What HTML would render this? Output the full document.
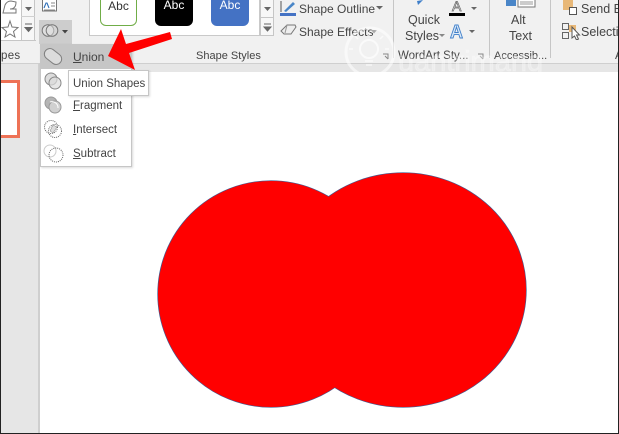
<!DOCTYPE html>
<html><head><meta charset="utf-8"><style>
html,body{margin:0;padding:0;background:#fff}
#p{position:relative;width:619px;height:434px;overflow:hidden;background:#fff;font-family:"Liberation Sans",sans-serif;color:#444}
.a{position:absolute}
.t{position:absolute;white-space:nowrap;font-size:11.5px;line-height:14px;color:#444}
.u{text-decoration:underline}
.abc{position:absolute;top:-6px;height:32px;border-radius:0 0 6px 6px;font-size:12px;text-align:center;line-height:23px;box-sizing:border-box}
.sep{position:absolute;top:0;width:1px;height:58px;background:#c6c6c6}
</style></head><body><div id="p">
<div class="a" style="left:0;top:0;width:619px;height:63px;background:#f1f1f1"></div>
<div class="a" style="left:0;top:63px;width:619px;height:1px;background:#cfcfcf"></div>
<div class="a" style="left:0;top:64px;width:619px;height:8px;background:#e6e6e6"></div>
<div class="a" style="left:0;top:64px;width:39px;height:370px;background:#e6e6e6"></div>
<div class="a" style="left:38px;top:64px;width:2px;height:370px;background:#cfcfcf"></div>
<div class="a" style="left:0;top:80px;width:20px;height:58px;background:#fff;border:3px solid #ee7256;border-left:0;box-sizing:border-box"></div>

<!-- shape gallery -->
<div class="a" style="left:1px;top:0;width:20px;height:40px;background:#fff"></div>
<div class="a" style="left:21px;top:0;width:14px;height:40px;background:#f7f7f7;border-left:1px solid #c6c6c6;border-right:1px solid #c6c6c6;box-sizing:border-box"></div>
<div class="a" style="left:0;top:40px;width:36px;height:1px;background:#c6c6c6"></div>
<div class="a" style="left:21px;top:16px;width:14px;height:1px;background:#d0d0d0"></div>
<svg class="a" style="left:0;top:0" width="70" height="44" fill="none">
<path d="M3 13 L5 5 Q7 1 11 1 L16 2 Q16 9 10 9 L16 9 L16 13Z" stroke="#777"/>
<path d="M10 21 L12 27 L18 27.500 L13.500 31.500 L15 37 L10 34 L5 37 L6.500 31.500 L2 27.500 L8 27Z" stroke="#777"/>
<path d="M25 7h7l-3.500 4z" fill="#666"/>
<path d="M25 24h7M25 27.500h7l-3.500 4z" stroke="#666" fill="#666" stroke-width="1"/>
<rect x="42.500" y="-1" width="14" height="12" fill="#fff" stroke="#777"/>
<path d="M44 8l2-5h1l2 5" stroke="#2e6fb8" stroke-width="1.100"/><path d="M51 3h4M51 6h4M44 10h11" stroke="#888"/>
</svg>
<div class="a" style="left:39px;top:20px;width:33px;height:24px;background:#cdcdcd"></div>
<svg class="a" style="left:39px;top:20px" width="33" height="24" fill="none">
<circle cx="9" cy="10.500" r="5.800" fill="#dedede" stroke="#777"/><circle cx="13" cy="10.500" r="5.800" fill="#dedede" fill-opacity=".5" stroke="#777"/>
<path d="M23 10h6l-3 3.500z" fill="#444"/>
</svg>
<div class="t" style="left:1px;top:49px;letter-spacing:.3px">pes</div>

<!-- shape styles -->
<div class="a" style="left:89px;top:0;height:36px;width:171px;background:#fff;border:1px solid #c9c9c9;border-top:0;box-sizing:border-box"></div>
<div class="abc" style="left:100px;width:37px;background:#fff;border:1px solid #70ad47;color:#333">Abc</div>
<div class="abc" style="left:155px;width:38px;background:#000;color:#fff">Abc</div>
<div class="abc" style="left:211px;width:38px;background:#4472c4;color:#fff">Abc</div>
<div class="a" style="left:260px;top:0;width:14px;height:36px;background:#f7f7f7;border:1px solid #c6c6c6;border-top:0;box-sizing:border-box"></div>
<div class="a" style="left:260px;top:17px;width:14px;height:1px;background:#c6c6c6"></div>
<svg class="a" style="left:260px;top:0" width="60" height="42" fill="none">
<path d="M4 7h7l-3.500 4z" fill="#666"/><path d="M4 24h7M4 27h7l-3.500 4z" stroke="#666" fill="#666"/>
<rect x="20" y="13" width="16" height="3" fill="#4472c4"/>
<path d="M24 11l9-9 2 2-9 8z" fill="#4a86c8"/><path d="M21 1v11" stroke="#555"/>
<path d="M21 31l6-6h8l1 2-5 7h-7z" fill="#eee" stroke="#777"/><path d="M27 25l-2 8" stroke="#999"/>
</svg>
<div class="t" style="left:299px;top:2px;font-size:12px">Shape Outline</div>
<div class="t" style="left:299px;top:25px;font-size:12px">Shape Effects</div>
<svg class="a" style="left:376px;top:6px" width="12" height="30"><path d="M0 0h7l-3.500 3.500z" fill="#666"/></svg>
<svg class="a" style="left:371px;top:30px" width="12" height="8"><path d="M0 0h6l-3 3.500z" fill="#aaa"/></svg>
<div class="t" style="left:196px;top:49px;font-size:11px">Shape Styles</div>
<svg class="a" style="left:382px;top:53px" width="8" height="8" fill="none"><path d="M1 1h5v5M3 3l3 3" stroke="#888"/></svg>
<div class="sep" style="left:393px"></div>

<!-- wordart -->
<svg class="a" style="left:400px;top:0" width="85" height="44" fill="none">
<path d="M17 1l6-1-5 5z" fill="#3f7fca"/>
<text x="52" y="11" font-family="Liberation Sans" font-size="14" fill="#fff" stroke="#666" stroke-width=".7">A</text>
<rect x="49" y="13" width="16" height="3" fill="#000"/>
<path d="M71 7h6l-3 3z" fill="#666"/>
<text x="50" y="38" font-family="Liberation Sans" font-size="18" font-weight="bold" fill="#dbe9f7" stroke="#3f7fca" stroke-width=".9">A</text>
<path d="M69 30h6l-3 3z" fill="#666"/>
</svg>
<div class="t" style="left:408px;top:13px;font-size:12.500px">Quick</div>
<div class="t" style="left:405px;top:29px;font-size:12.500px">Styles</div>
<svg class="a" style="left:439px;top:33px" width="8" height="6"><path d="M0 1h6l-3 3z" fill="#888"/></svg>
<div class="t" style="left:398px;top:49px;font-size:11.500px">WordArt Sty...</div>
<svg class="a" style="left:477px;top:53px" width="8" height="8" fill="none"><path d="M1 1h5v5M3 3l3 3" stroke="#888"/></svg>
<div class="sep" style="left:489px"></div>

<!-- alt text -->
<svg class="a" style="left:505px;top:0" width="32" height="10" fill="none"><rect x="1" y="-2" width="10" height="8" fill="#4a86c8"/><rect x="13" y="-1" width="17" height="8" fill="#fff" stroke="#777"/><path d="M15 2h13M15 4h13" stroke="#999"/></svg>
<div class="t" style="left:511px;top:13px;font-size:12.500px">Alt</div>
<div class="t" style="left:509px;top:29px;font-size:12.500px">Text</div>
<div class="t" style="left:494px;top:49px;font-size:11px">Accessib...</div>
<div class="sep" style="left:550px"></div>

<!-- arrange -->
<svg class="a" style="left:560px;top:0" width="22" height="40" fill="none">
<rect x="3" y="-2" width="10" height="12" fill="#e8b878"/><rect x="9.500" y="7.500" width="7" height="7" fill="#fff" stroke="#555"/>
<rect x="2.500" y="23.500" width="6" height="6" stroke="#666"/><rect x="2.500" y="32.500" width="6" height="6" stroke="#666"/>
<rect x="9" y="25" width="7" height="7" fill="#e8b878"/>
<path d="M12 27v11l2.500-2 2 4 2-1-2-4h3z" fill="#fff" stroke="#555"/>
</svg>
<div class="t" style="left:581px;top:2px;font-size:12.500px">Send B</div>
<div class="t" style="left:581px;top:25px;font-size:12.500px">Selectio</div>
<div class="t" style="left:615px;top:49px;font-size:11.500px">A</div>

<!-- shapes on canvas -->
<svg class="a" style="left:0;top:0" width="619" height="434">
<ellipse cx="271" cy="294" rx="113" ry="113" fill="#ff0000" stroke="#41598f" stroke-width="1.300"/>
<ellipse cx="403" cy="290" rx="123" ry="117" fill="#ff0000" stroke="#41598f" stroke-width="1.300"/>
<ellipse cx="271" cy="294" rx="113" ry="113" fill="#ff0000"/>
<ellipse cx="403" cy="290" rx="123" ry="117" fill="#ff0000"/>
</svg>

<!-- watermark -->
<svg class="a" style="left:340px;top:22px" width="279" height="58" fill="none">
<circle cx="30" cy="30" r="24" stroke="#fff" stroke-opacity=".55" stroke-width="3"/>
<circle cx="29" cy="27" r="9" stroke="#fff" stroke-opacity=".65" stroke-width="2"/>
<path d="M29 10v4M15 14l3 3M43 14l-3 3M9 27h4M45 27h4M25 39h8M26 43h6" stroke="#fff" stroke-opacity=".65" stroke-width="1.500"/>
<text x="58" y="49" font-family="Liberation Sans" font-size="29" fill="#fff" fill-opacity=".3" stroke="#fff" stroke-opacity=".25">uantrimang</text>
</svg>

<!-- menu -->
<div class="a" style="left:40px;top:44px;width:92px;height:123px;background:#fff;border:1px solid #c6c6c6;box-sizing:border-box;box-shadow:1px 1px 2px rgba(0,0,0,.15)"></div>
<div class="a" style="left:41px;top:45px;width:90px;height:24px;background:#c6c6c6"></div>
<svg class="a" style="left:41px;top:45px" width="24" height="122" fill="none">
<rect x="2.500" y="6" width="19" height="11" rx="5.500" transform="rotate(38 12 11.500)" fill="#dcdcdc" stroke="#808080"/>
<circle cx="10" cy="34" r="6" fill="#dcdcdc" stroke="#888"/><circle cx="14" cy="38" r="6" fill="#dcdcdc" fill-opacity=".7" stroke="#888"/>
<circle cx="10" cy="58" r="6" fill="#b5b5b5" stroke="#999"/><circle cx="14" cy="62" r="6" fill="#d0d0d0" stroke="#999"/><path d="M9 57a6 6 0 0 1 8 6" stroke="#fff"/>
<circle cx="10" cy="82" r="6.500" stroke="#666" stroke-dasharray="1 1"/><circle cx="14" cy="86" r="6.500" stroke="#666" stroke-dasharray="1 1"/><path d="M12 80l4 2-4 6-3-2z" fill="#ddd" stroke="#777" stroke-width=".5"/>
<circle cx="9" cy="106" r="6" stroke="#ccc"/><circle cx="15" cy="110" r="7" stroke="#666" stroke-dasharray="1 1"/>
</svg>
<div class="t" style="left:73px;top:50px;font-size:12px"><span class="u">U</span>nion</div>
<div class="t" style="left:73px;top:99px"><span class="u">F</span>ragment</div>
<div class="t" style="left:73px;top:123px"><span class="u">I</span>ntersect</div>
<div class="t" style="left:73px;top:147px"><span class="u">S</span>ubtract</div>

<!-- tooltip -->
<div class="a" style="left:68px;top:70px;width:81px;height:26px;background:#fff;border:1px solid #c6c6c6;box-sizing:border-box;box-shadow:1px 1px 2px rgba(0,0,0,.15)"></div>
<div class="t" style="left:73px;top:77px">Union Shapes</div>

<!-- red arrow -->
<svg class="a" style="left:0;top:0" width="200" height="90">
<path d="M108 56 L121 29 L126 44 L170 32 L172 39 L129 53 L135 70 Z" fill="#ff0000"/>
</svg>

<div class="a" style="left:0;top:0;width:1px;height:434px;background:#222"></div>
<div class="a" style="left:618px;top:0;width:1px;height:434px;background:#222"></div>
<div class="a" style="left:0;top:433px;width:619px;height:1px;background:#222"></div>
</div></body></html>
